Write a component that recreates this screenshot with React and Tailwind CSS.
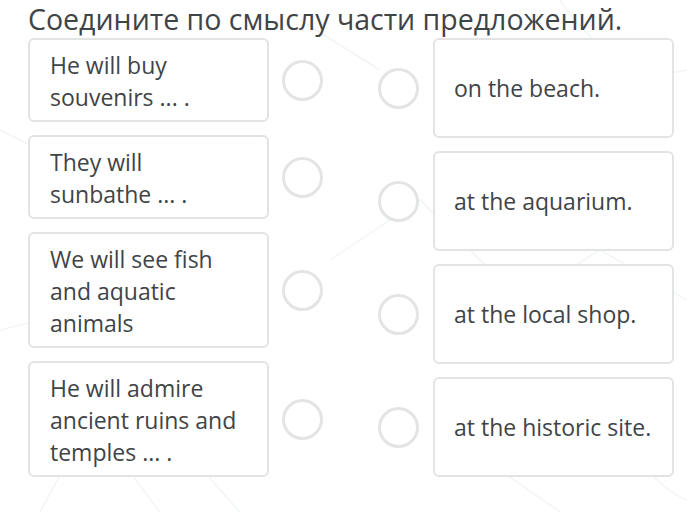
const left = [
  ["He will buy", "souvenirs ... ."],
  ["They will", "sunbathe ... ."],
  ["We will see fish", "and aquatic", "animals"],
  ["He will admire", "ancient ruins and", "temples ... ."],
];

const right = [
  "on the beach.",
  "at the aquarium.",
  "at the local shop.",
  "at the historic site.",
];

const Circle = () => (
  <div className="w-[41px] h-[41px] shrink-0 rounded-full border-[3px] border-[#e3e4e4] bg-white" />
);

export default function App() {
  return (
    <div
      className="relative w-[687px] h-[512px] overflow-hidden bg-white text-[#3f4447]"
      style={{ fontFamily: '"Open Sans", "Noto Sans", sans-serif' }}
    >
      {/* faint background pattern */}
      <svg
        className="absolute inset-0"
        width="687"
        height="512"
        viewBox="0 0 687 512"
        fill="none"
        stroke="#f1f6f5"
        strokeWidth="1.5"
      >
        <path d="M0 330 L120 300 L260 340 M40 512 L90 420 L160 512" />
        <path d="M330 260 L420 200 L520 300 L600 250 L687 300" />
        <path d="M560 0 C600 60 650 80 687 70 M300 20 L380 70" />
        <path d="M600 420 C640 460 660 490 687 500 M500 470 L560 512" />
        <path d="M140 400 L240 512 M0 130 L60 160" />
      </svg>

      <div className="relative pl-[28px]">
        <h1 className="h-[38px] text-[28.5px] leading-[38px] font-normal text-[#3f4447] whitespace-nowrap">
          Соедините по смыслу части предложений.
        </h1>

        <div className="flex">
          {/* left column */}
          <div className="flex flex-col gap-[13px]">
            {left.map((lines, i) => (
              <div key={i} className="flex items-center gap-[13px]">
                <div className="w-[241px] rounded-[6px] border-2 border-[#e2e4e4] bg-white pl-[20px] pr-2 pt-[9px] pb-[7px] text-[23px] leading-[32px]">
                  {lines.map((l, j) => (
                    <div key={j} className="whitespace-nowrap">
                      {l}
                    </div>
                  ))}
                </div>
                <Circle />
              </div>
            ))}
          </div>

          {/* right column */}
          <div className="ml-[55px] flex flex-col gap-[13px]">
            {right.map((t, i) => (
              <div key={i} className="flex items-center gap-[14px]">
                <Circle />
                <div className="w-[241px] h-[100px] flex items-center rounded-[6px] border-2 border-[#e2e4e4] bg-white pl-[19px] text-[23px] leading-[32px] whitespace-nowrap">
                  {t}
                </div>
              </div>
            ))}
          </div>
        </div>
      </div>
    </div>
  );
}
